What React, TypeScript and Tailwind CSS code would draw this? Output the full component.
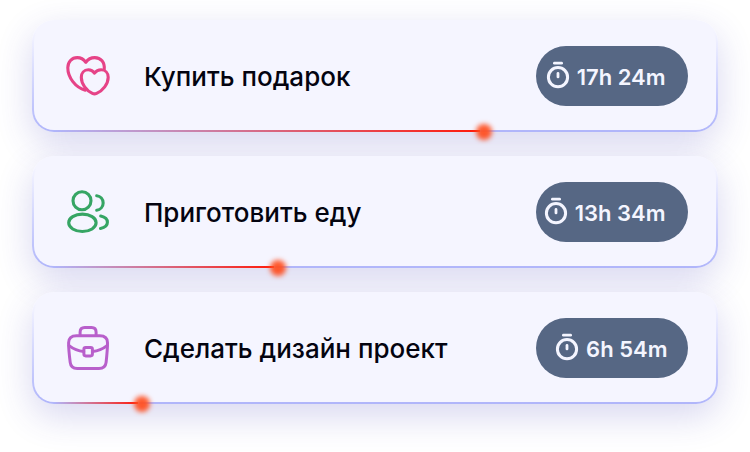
import type { ReactNode } from "react";

function HeartsIcon() {
  return (
    <svg className="size-12 text-[#e64387]" viewBox="64 52 48 48" fill="none" stroke="currentColor" strokeWidth="3.1" strokeLinecap="round" strokeLinejoin="round">
      <path d="M104.2 69.5C105 62.3 100.7 57.6 94.8 57.6C90.7 57.6 87.8 59.4 85.8 62.3C83.8 59.4 80.9 57.6 77.2 57.6C71.8 57.6 67.8 61.8 67.8 67.8C67.8 77.5 75.4 87.5 85.3 90.2" />
      <path d="M94.5 73.2C93 71 90.8 69.8 88.3 69.8C84.1 69.8 81.3 73 81.3 77.3C81.3 84 86.5 90.6 92.4 93.4C93.8 94.1 95.2 94.1 96.6 93.4C102.8 90.6 108.2 84 108.2 77.3C108.2 73 105.3 69.8 101.1 69.8C98.4 69.8 96.1 71 94.5 73.2Z" />
    </svg>
  );
}

function PeopleIcon() {
  return (
    <svg className="size-12 text-[#36a564]" viewBox="64 52 48 48" fill="none" stroke="currentColor" strokeWidth="3.1" strokeLinecap="round">
      <circle cx="82" cy="64.7" r="9" />
      <ellipse cx="82.4" cy="86.8" rx="13.7" ry="8.7" />
      <path d="M96.7 59.7A7.3 7.3 0 0 1 96.7 74.2" />
      <path d="M100.7 80C105.1 81 107.4 83.3 107.4 86.2C107.4 89.2 104.8 91.5 100.5 92.4" />
    </svg>
  );
}

function BriefcaseIcon() {
  return (
    <svg className="size-12 text-[#b85fcb]" viewBox="64 52 48 48" fill="none" stroke="currentColor" strokeWidth="3" strokeLinecap="round" strokeLinejoin="round">
      <path d="M80.1 63V60.3C80.1 57.2 81.8 55.5 84.7 55.5H91.5C94.4 55.5 96.1 57.2 96.1 60.3V63" />
      <path d="M76.5 63.8H99.7C105 63.8 107.5 66.3 107.5 70.8C107.5 74.5 106.7 85 106.1 90.3C105.6 94.8 103.5 96.4 99 96.4H77.2C72.7 96.4 70.7 94.8 70.2 90.3C69.5 85 68.6 74.5 68.6 70.8C68.6 66.3 71.2 63.8 76.5 63.8Z" />
      <path d="M69 73.6C73.2 76.8 78.2 79 83.7 79.6M92.5 79.6C98 79 103 76.8 107.1 73.6" />
      <rect x="83.9" y="75.5" width="8.5" height="8.4" rx="1.8" />
    </svg>
  );
}

function TimerIcon() {
  return (
    <svg className="h-8 w-6 shrink-0" viewBox="0 0 24 32" fill="none" stroke="currentColor" strokeLinecap="round">
      <path d="M8.4 3.2H15.6" strokeWidth="2.8" />
      <circle cx="12" cy="17.2" r="9.6" strokeWidth="3" />
      <path d="M12 13.5V16.9" strokeWidth="2.8" />
    </svg>
  );
}

interface Task {
  title: string;
  time: string;
  icon: ReactNode;
  progress: number;
  pillPadding: string;
}

const tasks: Task[] = [
  { title: "Купить подарок", time: "17h 24m", icon: <HeartsIcon />, progress: 426, pillPadding: "pr-[22.5px]" },
  { title: "Приготовить еду", time: "13h 34m", icon: <PeopleIcon />, progress: 220, pillPadding: "pr-[22.5px]" },
  { title: "Сделать дизайн проект", time: "6h 54m", icon: <BriefcaseIcon />, progress: 84, pillPadding: "pr-[20.5px]" },
];

function TaskCard({ title, time, icon, progress, pillPadding }: Task) {
  return (
    <li className="relative h-28 rounded-[22px] bg-linear-to-b from-[#f5f5ff] from-10% to-[#b0b5fa] p-0.5 shadow-[0_12px_36px_rgba(60,55,180,0.2)]">
      <div className="flex h-full items-center rounded-[20px] bg-[#f5f5ff] pr-7 pl-[30px]">
        {icon}
        <h2 className="ml-8 grow pt-0.5 text-[26px] leading-8 font-medium whitespace-nowrap text-[#040410]">{title}</h2>
        <div className={`flex h-[60px] w-[152px] items-center justify-end gap-[7px] rounded-full bg-[#566784] text-[#f4f5ff] ${pillPadding}`}>
          <TimerIcon />
          <span className="pt-0.5 text-[22px] leading-7 font-semibold whitespace-nowrap">{time}</span>
        </div>
      </div>
      <div className="absolute bottom-0 left-[22px] h-0.5 bg-linear-to-r from-[#ff1a0a]/0 to-[#ff1a0a]" style={{ width: progress }}>
        <span className="absolute -top-[6px] -right-[12px] size-4 rounded-full bg-[#ff5022]/95 blur-[2.5px]" />
      </div>
    </li>
  );
}

export default function App() {
  return (
    <main className="h-[452px] overflow-hidden bg-white px-8 pt-5 font-['Inter','Liberation_Sans',sans-serif]">
      <ul className="flex flex-col gap-6">
        {tasks.map((task) => (
          <TaskCard key={task.title} {...task} />
        ))}
      </ul>
    </main>
  );
}
